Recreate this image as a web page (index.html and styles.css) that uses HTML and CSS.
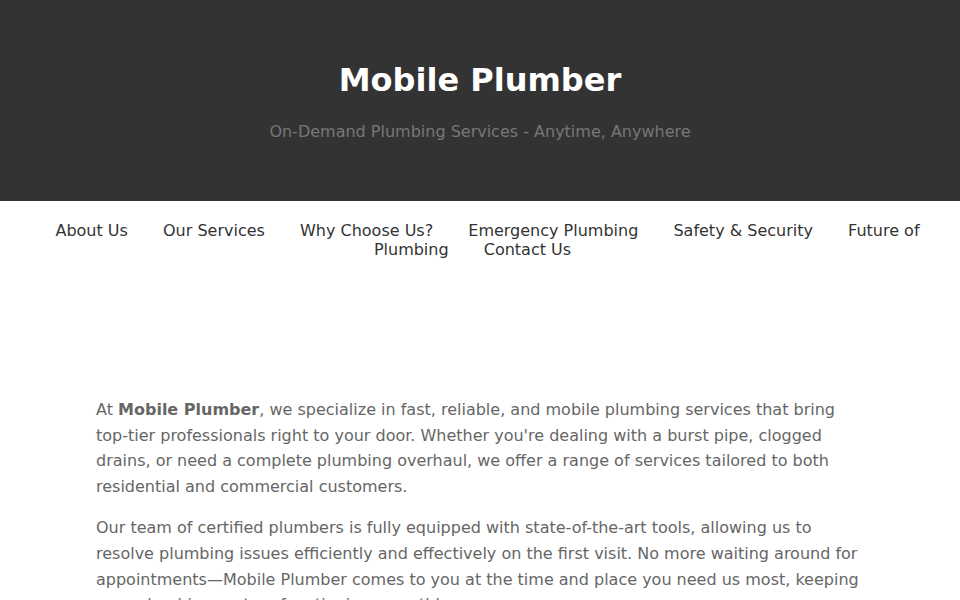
FILE: index.html
```html
<!DOCTYPE html>
<html lang="en">
<head>
<meta charset="utf-8">
<title>Mobile Plumber</title>
<link rel="stylesheet" href="styles.css">
</head>
<body>
<header class="site-header">
  <h1 class="site-title">Mobile Plumber</h1>
  <p class="site-tagline">On-Demand Plumbing Services - Anytime, Anywhere</p>
</header>
<nav class="site-nav">
  <a href="#about">About Us</a>
  <a href="#services">Our Services</a>
  <a href="#why">Why Choose Us?</a>
  <a href="#emergency">Emergency Plumbing</a>
  <a href="#safety">Safety &amp; Security</a>
  <a href="#future">Future of Plumbing</a>
  <a href="#contact">Contact Us</a>
</nav>
<main class="content">
  <section class="intro">
    <p>At <strong>Mobile Plumber</strong>, we specialize in fast, reliable, and mobile plumbing services that bring top-tier professionals right to your door. Whether you're dealing with a burst pipe, clogged drains, or need a complete plumbing overhaul, we offer a range of services tailored to both residential and commercial customers.</p>
    <p>Our team of certified plumbers is fully equipped with state-of-the-art tools, allowing us to resolve plumbing issues efficiently and effectively on the first visit. No more waiting around for appointments—Mobile Plumber comes to you at the time and place you need us most, keeping your plumbing system functioning smoothly.</p>
  </section>
</main>
</body>
</html>
```
FILE: styles.css
```css
html, body {
  margin: 0;
  padding: 0;
}
body {
  font-family: "DejaVu Sans", Verdana, sans-serif;
  background: #fff;
  color: #333;
}
.site-header {
  background: #333;
  color: #fff;
  text-align: center;
  padding: 61px 20px 60px;
}
.site-title {
  margin: 0 0 23px;
  font-size: 32px;
  line-height: 38px;
  font-weight: bold;
}
.site-tagline {
  margin: 0;
  font-size: 16px;
  line-height: 19px;
  color: #777;
}
.site-nav {
  text-align: center;
  padding: 20px 20px;
  font-size: 16px;
  line-height: 19px;
}
.site-nav a {
  color: #333;
  text-decoration: none;
  margin: 0 15px;
}
.content {
  box-sizing: border-box;
  max-width: 800px;
  margin: 0 auto;
  padding: 118px 16px 40px;
}
.intro p {
  margin: 0 0 16px;
  font-size: 16px;
  line-height: 25.6px;
  color: #666;
}
.intro strong {
  color: #666;
}
```
